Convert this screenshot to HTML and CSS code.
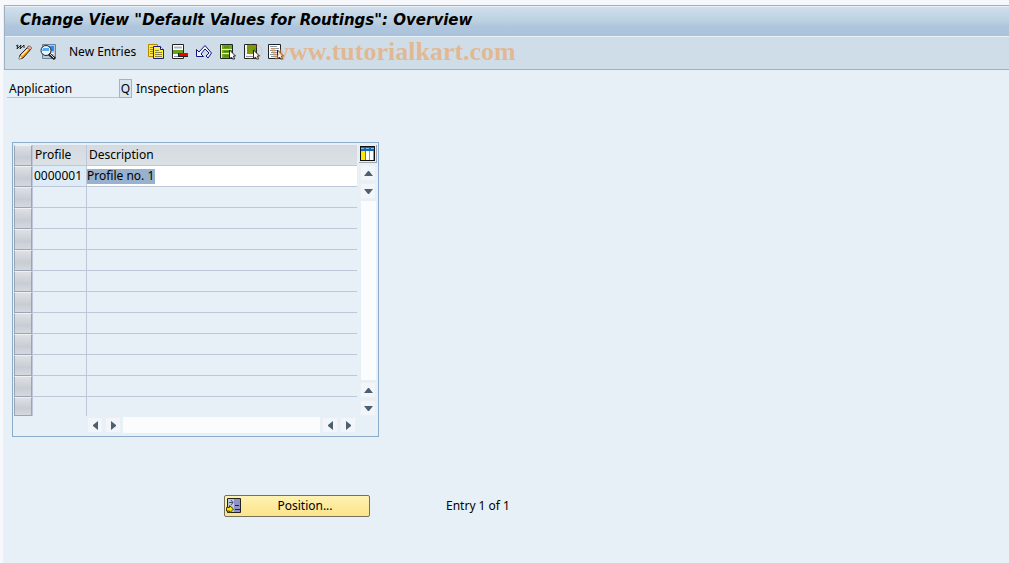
FILE: index.html
```
<!DOCTYPE html>
<html lang="en">
<head>
  <meta charset="UTF-8">
  <meta name="viewport" content="width=device-width, initial-scale=1.0">
  <title>Change View "Default Values for Routings": Overview</title>
  <link rel="stylesheet" href="styles.css">
</head>
<body>
  <div class="screen">
    <header class="header">
      <h1>Change View "Default Values for Routings": Overview</h1>
      <div class="toolbar">
        <button class="tool" aria-label="Display / Change">
          <svg width="16" height="16" viewBox="0 0 16 16"><path d="M0 2l2-1-1 4 4-4-1 4 4-4v3" fill="none" stroke="#222"/><path d="M4 11l8-8 3 2-8 9-4 1z" fill="#f90" stroke="#222"/><path d="M5 11l7-7 1 1-7 7z" fill="#fff3a8"/><path d="M4 12l2 2-3 1z" fill="#fff"/><path d="M12 2h2l2 2-2 2-3-2z" fill="#e8a8a0" stroke="#333" stroke-width=".5"/></svg>
        </button>
        <button class="tool" aria-label="Find">
          <svg width="16" height="16" viewBox="0 0 16 16"><path d="M2.500.5h13v14h-13z" fill="#b8c8d8" stroke="#6f8294"/><path d="M4 2h10v5H4z" fill="#2a8cf0"/><path d="M11 9.500h3M11 11.500h3" stroke="#fff"/><circle cx="6" cy="6.500" r="5" fill="#e8f3fc" stroke="#222"/><path d="M3 4h6v3H2z" fill="#58a8f5"/><path d="M9 10l6 5" stroke="#222" stroke-width="3"/><path d="M10 10l4 4" stroke="#ddd"/></svg>
        </button>
        <button class="new-entries">New Entries</button>
        <button class="tool" aria-label="Copy As">
          <svg width="16" height="16" viewBox="0 0 16 16"><path d="M.5.5h9v12h-9z" fill="#ffe94a" stroke="#b88600"/><path d="M2 3.500h4M2 5.500h3M2 7.500h3M2 9.500h3" stroke="#b88600"/><path d="M5.500 2.500h7l3 3v9h-10z" fill="#ffee3c" stroke="#1a1a80"/><path d="M12.500 2.500v3h3" fill="#fff" stroke="#1a1a80"/><path d="M7 6.500h4M7 8.500h7M7 10.500h7M7 12.500h7" stroke="#8a8646"/></svg>
        </button>
        <button class="tool" aria-label="Delete">
          <svg width="16" height="16" viewBox="0 0 16 16"><path d="M.5.5h11v14H.5z" fill="#fff" stroke="#222"/><path d="M2 3.500h8" stroke="#aab4c0" stroke-width="2"/><path d="M1 6h10v4H1z" fill="#62a420"/><path d="M2 12.500h4" stroke="#8797a8"/><path d="M6 9h10v4H6z" fill="#222"/><path d="M7 9h9v3H7z" fill="#f00000"/></svg>
        </button>
        <button class="tool" aria-label="Undo Change">
          <svg width="16" height="16" viewBox="0 0 16 16"><path d="M.5 5.500v7h7L5 10l4-5 4 4-3 3 2 2 3.500-5L9 1.500 3 8z" fill="#eef4fa" stroke="#141480"/></svg>
        </button>
        <button class="tool" aria-label="Select All">
          <svg width="16" height="16" viewBox="0 0 16 16"><path d="M.5.5h12v14H.5z" fill="#e6f2d0" stroke="#222"/><path d="M2 1h10v4H2zM2 6h10v3H2zM2 10h10v4H2z" fill="#6fa51c"/><path d="M4 3h5M4 7.500h5M4 12h5" stroke="#4a7810"/><path d="M9.500 6v9l2-2 1 2h2l-1-3h2z" fill="#fff" stroke="#222"/></svg>
        </button>
        <button class="tool" aria-label="Select Block">
          <svg width="16" height="16" viewBox="0 0 16 16"><path d="M.5.5h12v14H.5z" fill="#fff" stroke="#222"/><path d="M3 1h9v9H3z" fill="#6f9c08"/><path d="M2 12.500h7" stroke="#8797a8"/><path d="M9.500 6v9l2-2 1 2h2l-1-3h2z" fill="#fff" stroke="#222"/></svg>
        </button>
        <button class="tool" aria-label="Deselect All">
          <svg width="16" height="16" viewBox="0 0 16 16"><path d="M.5.5h12v14H.5z" fill="#fff" stroke="#222"/><path d="M2 2.500h7M3 4.500h8M2 6.500h7M3 8.500h6M2 10.500h7M3 12.500h6" stroke="#8797a8"/><path d="M9.500 6v9l2-2 1 2h2l-1-3h2z" fill="#fff" stroke="#222"/></svg>
        </button>
        <span class="watermark"><small>©</small> www.tutorialkart.com</span>
      </div>
    </header>

    <main>
      <div class="field">
        <label for="application">Application</label>
        <input id="application" value="Q" readonly>
        <span>Inspection plans</span>
      </div>

      <div class="table-box">
        <table>
          <thead>
            <tr><th class="select"><button aria-label="Select all rows"></button></th><th class="profile">Profile</th><th>Description</th></tr>
          </thead>
          <tbody>
            <tr class="filled"><td class="select"><button aria-label="Row 1"></button></td><td>0000001</td><td><input class="description" value="Profile no. 1" aria-label="Description"></td></tr>
            <tr><td class="select"><button aria-label="Row 2"></button></td><td></td><td></td></tr>
            <tr><td class="select"><button aria-label="Row 3"></button></td><td></td><td></td></tr>
            <tr><td class="select"><button aria-label="Row 4"></button></td><td></td><td></td></tr>
            <tr><td class="select"><button aria-label="Row 5"></button></td><td></td><td></td></tr>
            <tr><td class="select"><button aria-label="Row 6"></button></td><td></td><td></td></tr>
            <tr><td class="select"><button aria-label="Row 7"></button></td><td></td><td></td></tr>
            <tr><td class="select"><button aria-label="Row 8"></button></td><td></td><td></td></tr>
            <tr><td class="select"><button aria-label="Row 9"></button></td><td></td><td></td></tr>
            <tr><td class="select"><button aria-label="Row 10"></button></td><td></td><td></td></tr>
            <tr><td class="select"><button aria-label="Row 11"></button></td><td></td><td></td></tr>
            <tr><td class="select"><button aria-label="Row 12"></button></td><td></td><td></td></tr>
          </tbody>
        </table>
        <div class="side">
          <button class="config" aria-label="Table settings">
            <svg width="15" height="15" viewBox="0 0 15 15"><path d="M0 0h15v15H0z" fill="#111"/><path d="M1 1h13v13H1z" fill="#fff"/><path d="M1 1h13v4H1z" fill="#1668b0"/><path d="M1 2h3v1H1zM6 2h3v1H6zM11 2h3v1h-3z" fill="#7fc4f2"/><path d="M1 5h4v9H1z" fill="#ffe600"/><path d="M5.500 5v9" stroke="#8a7a00"/><path d="M9.500 5v9M13.500 5v9" stroke="#8c98a4"/></svg>
          </button>
          <button class="arrow" aria-label="Scroll up"><svg width="9" height="5"><path d="M0 5L4 0h1l4 5z"/></svg></button>
          <button class="arrow" aria-label="Line down"><svg width="9" height="5"><path d="M0 0h9L5 5H4z"/></svg></button>
          <div class="track"></div>
          <button class="arrow" aria-label="Line up"><svg width="9" height="5"><path d="M0 5L4 0h1l4 5z"/></svg></button>
          <button class="arrow" aria-label="Scroll down"><svg width="9" height="5"><path d="M0 0h9L5 5H4z"/></svg></button>
        </div>
        <div class="bottom">
          <button class="arrow" aria-label="Scroll left"><svg width="5" height="9"><path d="M5 0v9L0 5V4z"/></svg></button>
          <button class="arrow" aria-label="Column right"><svg width="5" height="9"><path d="M0 0v9l5-4V4z"/></svg></button>
          <div class="track"></div>
          <button class="arrow" aria-label="Column left"><svg width="5" height="9"><path d="M5 0v9L0 5V4z"/></svg></button>
          <button class="arrow" aria-label="Scroll right"><svg width="5" height="9"><path d="M0 0v9l5-4V4z"/></svg></button>
        </div>
      </div>

      <div class="footer">
        <button class="position">
          <svg width="16" height="16" viewBox="0 0 16 16"><path d="M1.500.5h13v14h-13z" fill="#b9cbd9" stroke="#222"/><path d="M8 1h6v13H8z" fill="#8e92c8"/><path d="M3 4.500h4M5 2l2 2.500L5 7" fill="none" stroke="#456"/><path d="M9 7.500h4M9 11.500h5" stroke="#223"/><path d="M.5 9.500h3v-2l4 3.500-4 4v-2h-3z" fill="#ffe600" stroke="#443c00"/></svg>
          <span>Position...</span>
        </button>
        <span>Entry 1 of 1</span>
      </div>
    </main>
  </div>
</body>
</html>
```
FILE: styles.css
```
:root {
  --page: #e8f0f7;
  --line: #bcc7d8;
  --edge: #9ba5b3;
}
* {
  box-sizing: border-box;
}
body {
  margin: 0;
  padding: 5px 0 0 3px;
  min-height: 100vh;
  background: #f6f8fb;
  font-family: "Noto Sans", sans-serif;
  font-size: 12px;
  line-height: 16px;
  color: #000;
}
button, input {
  font: inherit;
  color: inherit;
  margin: 0;
  padding: 0;
  border: 0;
  background: none;
}
svg {
  display: block;
}
.screen {
  min-height: calc(100vh - 5px);
  background: var(--page);
}
.header {
  margin-left: 1px;
  border: solid #a0b0c3;
  border-width: 1px 0 1px 1px;
}
h1 {
  margin: 0;
  height: 31px;
  padding: 0 15px;
  border: solid #e9f1f8;
  border-width: 1px 0;
  background: linear-gradient(#d0dfed, #bbd0de 50%, #afc6de 65%, #abc2dc);
  font: italic bold 15px/26px "DejaVu Sans", sans-serif;
}
.toolbar {
  position: relative;
  display: flex;
  align-items: center;
  gap: 8px;
  height: 32px;
  padding: 0 11px 2px;
  background: #cfdde8;
}
.new-entries {
  margin: 0 4px 0 5px;
}
.watermark {
  position: absolute;
  left: 239px;
  top: 0;
  font: bold 26px/30px "Liberation Serif", serif;
  color: rgba(244, 148, 60, 0.5);
  white-space: nowrap;
  pointer-events: none;
}
.watermark small {
  font-size: 26px;
  font-weight: normal;
  opacity: 0.5;
}
.field {
  display: flex;
  padding: 9px 0 0 4px;
}
.field label {
  width: 112px;
  height: 19px;
  padding: 2px;
  border-bottom: 1px solid #bbc3cb;
}
.field input {
  width: 13px;
  height: 19px;
  border: 1px solid #a8b2bc;
  background: #d8e6f0;
  text-align: center;
}
.field span {
  padding: 2px 4px;
}
.table-box {
  display: grid;
  grid-template-columns: 343px 16px;
  column-gap: 3px;
  row-gap: 1px;
  width: 367px;
  margin: 43px 9px 0;
  padding: 2px 1px 3px;
  border: 1px solid #8baccb;
}
table {
  width: 100%;
  border-collapse: separate;
  border-spacing: 0;
  table-layout: fixed;
}
th, td {
  height: 21px;
  padding: 0 1px;
  border-bottom: 1px solid var(--line);
  border-left: 1px solid var(--line);
  text-align: left;
  font-weight: normal;
}
th {
  padding: 0 2px;
  background: linear-gradient(#d4dadf, #dce1e6);
}
tbody tr:last-child td {
  height: 19px;
  border-bottom: 0;
}
.select {
  width: 18px;
  padding: 0;
  border: 0;
}
.profile {
  width: 54px;
}
.select button {
  display: block;
  width: 18px;
  height: 21px;
  border: 1px solid var(--edge);
  border-top-color: #eef1f4;
  background: linear-gradient(#dde0e4, #c8cdd5 60%, #d5d9de);
}
tbody tr:last-child button {
  height: 19px;
}
.filled td {
  background: #deecf7;
}
.filled td:last-child {
  padding: 0;
  background: #fff;
}
.description {
  display: block;
  width: 68px;
  height: 15px;
  background: #98b1cf;
}
.side {
  display: flex;
  flex-direction: column;
  align-items: center;
  gap: 2px;
}
.config {
  display: grid;
  place-items: center;
  width: 18px;
  height: 18px;
  border: solid var(--edge);
  border-width: 0 1px 1px 0;
}
.arrow {
  display: grid;
  place-items: center;
  width: 16px;
  height: 16px;
  border: 1px solid #eceff3;
  background: #f2f6fb;
  fill: #4c6072;
}
.side .track {
  width: 15px;
}
.track {
  flex: 1;
  background: #fbfcfd;
}
.bottom {
  display: flex;
  gap: 2px;
  padding: 0 1px 0 73px;
}
.footer {
  display: flex;
  align-items: center;
  gap: 76px;
  padding: 58px 0 0 221px;
}
.position {
  display: flex;
  align-items: center;
  width: 146px;
  height: 22px;
  padding: 0 1px;
  border: 1px solid #77705c;
  border-radius: 2px;
  background: linear-gradient(#fff3b5, #fdea9c 50%, #fbe48b);
}
.position span {
  flex: 1;
}
```
